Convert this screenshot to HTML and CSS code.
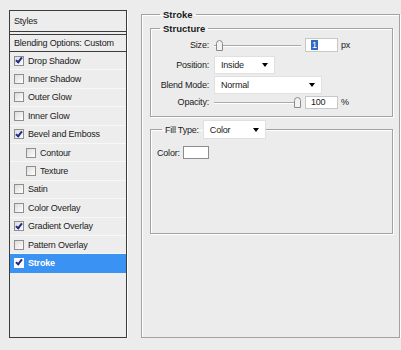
FILE: index.html
```html
<!DOCTYPE html>
<html lang="en">
<head>
    <meta charset="UTF-8">
    <title>Layer Style - Stroke</title>
    <link rel="stylesheet" href="styles.css">
</head>
<body>
    <div class="dialog">
        <!-- left list of effects -->
        <div class="styles-panel">
            <div class="panel-head">Styles</div>
            <div class="panel-blend">Blending Options: Custom</div>
            <ul class="effect-list">
                <li class="effect"><span class="check on"></span>Drop Shadow</li>
                <li class="effect"><span class="check"></span>Inner Shadow</li>
                <li class="effect"><span class="check"></span>Outer Glow</li>
                <li class="effect"><span class="check"></span>Inner Glow</li>
                <li class="effect"><span class="check on"></span>Bevel and Emboss</li>
                <li class="effect sub"><span class="check"></span>Contour</li>
                <li class="effect sub"><span class="check"></span>Texture</li>
                <li class="effect"><span class="check"></span>Satin</li>
                <li class="effect"><span class="check"></span>Color Overlay</li>
                <li class="effect"><span class="check on"></span>Gradient Overlay</li>
                <li class="effect"><span class="check"></span>Pattern Overlay</li>
                <li class="effect selected"><span class="check on"></span>Stroke</li>
            </ul>
        </div>

        <!-- stroke settings -->
        <fieldset class="group stroke-group">
            <legend class="group-title">Stroke</legend>

            <fieldset class="group structure">
                <legend class="group-title">Structure</legend>
                <div class="form-rows">
                    <div class="row row-size">
                        <label class="row-label">Size:</label>
                        <div class="slider"><span class="thumb"><svg width="7" height="11" viewBox="0 0 7 11"><path d="M0.5 10.5V3.5Q0.5 0.5 3.5 0.5Q6.5 0.5 6.5 3.5V10.5Z" fill="#f2f2f2" stroke="#8a8a8a"/></svg></span></div>
                        <div class="num"><span class="sel">1</span></div>
                        <span class="unit">px</span>
                    </div>
                    <div class="row row-pos">
                        <label class="row-label">Position:</label>
                        <div class="select select-pos">Inside<span class="arrow"></span></div>
                    </div>
                    <div class="row row-blend">
                        <label class="row-label">Blend Mode:</label>
                        <div class="select select-blend">Normal<span class="arrow"></span></div>
                    </div>
                    <div class="row row-opacity">
                        <label class="row-label">Opacity:</label>
                        <div class="slider"><span class="thumb end"><svg width="7" height="11" viewBox="0 0 7 11"><path d="M0.5 10.5V3.5Q0.5 0.5 3.5 0.5Q6.5 0.5 6.5 3.5V10.5Z" fill="#f2f2f2" stroke="#8a8a8a"/></svg></span></div>
                        <div class="num num-op">100</div>
                        <span class="unit">%</span>
                    </div>
                </div>
            </fieldset>

            <fieldset class="group fill">
                <legend class="fill-legend">
                    <span>Fill Type:</span>
                    <div class="select select-fill">Color<span class="arrow"></span></div>
                </legend>
                <div class="color-row">
                    <span>Color:</span>
                    <span class="swatch"></span>
                </div>
            </fieldset>
        </fieldset>
    </div>
</body>
</html>
```

FILE: styles.css
```css
body {
    margin: 0;
    background-color: #ececec;
    font-family: "Liberation Sans", Arial, sans-serif;
    font-size: 9px;
    letter-spacing: -0.2px;
    color: #1a1a1a;
    white-space: nowrap;
}

.dialog {
    display: flex;
    align-items: flex-start;
    padding: 8px 0 0 9px;
}

/* ---- left panel ---- */
.styles-panel {
    width: 118px;
    height: 328px;
    margin-top: 2px;
    box-sizing: border-box;
    border: 1px solid #3c3c3c;
    box-shadow: 1px 1px 0 #ffffff;
    background-color: #ededed;
    flex-shrink: 0;
}

.panel-head {
    height: 20px;
    line-height: 21px;
    padding-left: 4px;
    border-bottom: 1px solid #3c3c3c;
}

.panel-blend {
    height: 16px;
    line-height: 16px;
    margin-top: 2px;
    padding-left: 4px;
    border-top: 1px solid #3c3c3c;
    border-bottom: 1px solid #3c3c3c;
}

.effect-list {
    list-style: none;
    margin: 0;
    padding: 0;
}

.effect {
    display: flex;
    align-items: center;
    height: 18.4px;
    box-sizing: border-box;
    padding-left: 4px;
    border-bottom: 1px solid #f7f7f7;
}

.effect.sub {
    padding-left: 16px;
}

.effect.selected {
    background-color: #3a92f2;
    color: #ffffff;
    font-weight: bold;
    border-bottom-color: #3a92f2;
}

.check {
    width: 10px;
    height: 10px;
    box-sizing: border-box;
    border: 1px solid #8f8f8f;
    background: linear-gradient(135deg, #dcdcdc, #ffffff);
    margin-right: 4px;
    display: flex;
    align-items: center;
    justify-content: center;
    flex-shrink: 0;
}

.check.on::after {
    content: "";
    width: 2px;
    height: 5px;
    margin-top: -2px;
    border: solid #1e2c8c;
    border-width: 0 2px 2px 0;
    transform: rotate(38deg);
}

.selected .check {
    background: #ffffff;
    border-color: #ffffff;
}

/* ---- fieldsets ---- */
.group {
    margin: 0;
    border: 1px solid #a2a2a2;
    box-shadow: inset 1px 1px 0 #ffffff, 1px 1px 0 #ffffff;
}

.group-title {
    font-size: 9.5px;
    letter-spacing: 0;
    font-weight: bold;
    padding: 0 3px;
    line-height: 13px;
}

.stroke-group {
    width: 259px;
    height: 330px;
    box-sizing: border-box;
    margin: 0 0 0 14px;
    padding: 0 6px 0 8px;
}

.stroke-group > .group-title {
    margin-left: 10px;
}

.structure {
    padding: 1px 0 7px 0;
    margin-top: 1px;
}

.structure > .group-title {
    margin-left: 9px;
}

.form-rows {
    display: flex;
    flex-direction: column;
}

.row {
    display: flex;
    align-items: center;
}

.row-size { height: 18px; }
.row-pos { height: 21px; }
.row-blend { height: 20px; }
.row-opacity { height: 14px; }

.row-label {
    width: 58px;
    text-align: right;
    margin-right: 5px;
    flex-shrink: 0;
}

.slider {
    width: 87px;
    height: 11px;
    display: flex;
    align-items: flex-end;
    background: linear-gradient(#a9a9a9, #a9a9a9) 0 5px / 100% 1px no-repeat,
                linear-gradient(#ffffff, #ffffff) 0 6px / 100% 1px no-repeat;
}

.thumb {
    display: flex;
    margin-left: 2px;
}

.thumb.end {
    margin-left: auto;
    margin-right: 0;
}

.num {
    width: 33px;
    height: 14px;
    box-sizing: border-box;
    margin-left: 4px;
    background-color: #ffffff;
    border: 1px solid #c8c8c8;
    padding-left: 5px;
    line-height: 12px;
}

.num-op {
    height: 13px;
    line-height: 11px;
}

.sel {
    background-color: #316ac5;
    color: #ffffff;
    padding: 0 1px;
}

.unit {
    margin-left: 3px;
}

.select {
    height: 18px;
    box-sizing: border-box;
    background-color: #ffffff;
    border: 1px solid #e0e0e0;
    display: flex;
    align-items: center;
    justify-content: space-between;
    padding: 0 6px 0 6px;
}

.select-pos { width: 61px; }
.select-blend { width: 108px; }
.select-fill { width: 63px; height: 19px; }

.arrow {
    width: 0;
    height: 0;
    border-left: 3.5px solid transparent;
    border-right: 3.5px solid transparent;
    border-top: 4px solid #000000;
}

.fill {
    margin-top: 3px;
    height: 114px;
    box-sizing: border-box;
    padding: 0 0 0 6px;
}

.fill-legend {
    display: flex;
    align-items: center;
    gap: 4px;
    margin-left: 5px;
    padding: 0 0 0 3px;
}

.color-row {
    display: flex;
    align-items: center;
    gap: 3px;
    margin-top: 7px;
}

.swatch {
    width: 26px;
    height: 13px;
    box-sizing: border-box;
    background-color: #ffffff;
    border: 1px solid #8c8c8c;
}
```
